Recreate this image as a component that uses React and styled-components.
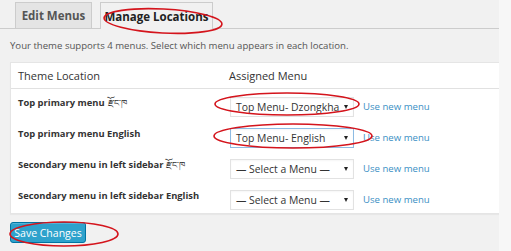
import React from 'react';
import styled, { createGlobalStyle } from 'styled-components';

const GlobalStyle = createGlobalStyle`
  html, body {
    margin: 0;
    padding: 0;
    background: #f7f7f7;
  }
  body {
    font-family: "Open Sans", "Noto Sans", sans-serif;
    color: #444;
  }
`;

const Page = styled.div`
  position: relative;
  display: flex;
  width: 511px;
  height: 251px;
  overflow: hidden;
`;

const Main = styled.div`
  width: 499px;
  background: #f1f1f1;
  padding-top: 2px;
  box-sizing: border-box;
`;

const Side = styled.div`
  flex: 1;
  background: #f7f7f7;
`;

const TabBar = styled.div`
  display: flex;
  align-items: flex-end;
  gap: 8px;
  padding-left: 15px;
  height: 26px;
  border-bottom: 1px solid #ccc;
`;

const Tab = styled.div`
  display: flex;
  align-items: center;
  justify-content: center;
  width: ${(p) => p.$w}px;
  box-sizing: border-box;
  border: 1px solid #ccc;
  border-bottom: none;
  background: ${(p) => (p.$active ? '#f1f1f1' : '#e4e4e4')};
  margin-bottom: ${(p) => (p.$active ? '-1px' : '0')};
  height: ${(p) => (p.$active ? '27px' : '26px')};
  font-size: 11.5px;
  font-weight: 700;
  color: ${(p) => (p.$active ? '#222' : '#555')};
`;

const Intro = styled.p`
  margin: 0;
  padding: 10px 0 0 10px;
  font-size: 9.6px;
  line-height: 13px;
  color: #555;
`;

const Table = styled.div`
  margin: 10px 0 0 10px;
  width: 489px;
  background: #fff;
  border: 1px solid #e5e5e5;
  border-right: none;
  box-sizing: border-box;
  box-shadow: 0 1px 1px rgba(0, 0, 0, 0.04);
`;

const HeadRow = styled.div`
  display: grid;
  grid-template-columns: 211px 1fr;
  height: 25px;
  align-items: center;
  border-bottom: 1px solid #e1e1e1;
  padding-left: 7px;
  font-size: 11px;
  color: #333;
`;

const Row = styled.div`
  display: grid;
  grid-template-columns: 212px 1fr;
  height: 31px;
  padding-left: 7px;
`;

const Label = styled.div`
  padding-top: 7px;
  font-size: 9.4px;
  font-weight: 700;
  color: #333;
  line-height: 13px;
`;

const Dz = styled.span`
  font-weight: 400;
  font-size: 9px;
  margin-left: 3px;
`;

const Cell = styled.div`
  display: flex;
  align-items: flex-start;
  padding-top: 8px;
  gap: 9px;
`;

const Select = styled.div`
  display: flex;
  align-items: center;
  justify-content: space-between;
  width: 124px;
  height: 20px;
  box-sizing: border-box;
  padding: 0 5px 0 5px;
  background: #fff;
  border: 1px solid ${(p) => (p.$focus ? '#8dbbe3' : '#e2e2e2')};
  box-shadow: inset 0 1px 2px rgba(0, 0, 0, 0.04);
  font-size: 10.4px;
  color: #333;
  white-space: nowrap;
`;

const Arrow = styled.span`
  flex: none;
  width: 0;
  height: 0;
  border-left: 2.5px solid transparent;
  border-right: 2.5px solid transparent;
  border-top: 4px solid #222;
`;

const UseNew = styled.a`
  font-size: 9.6px;
  line-height: 20px;
  color: #3a8fc4;
  text-decoration: none;
`;

const SaveButton = styled.button`
  display: block;
  margin: 8px 0 0 10px;
  width: 76px;
  height: 21px;
  padding: 0;
  background: #2ea2cc;
  border: 1px solid #0074a2;
  border-radius: 3px;
  box-shadow: inset 0 1px 0 rgba(120, 200, 230, 0.5);
  color: #fff;
  font-family: "Open Sans", "Noto Sans", sans-serif;
  font-size: 10.5px;
`;

const Marks = styled.svg`
  position: absolute;
  inset: 0;
  pointer-events: none;
`;

const locations = [
  { label: 'Top primary menu', dz: true, value: 'Top Menu- Dzongkha' },
  { label: 'Top primary menu English', value: 'Top Menu- English', focus: true },
  { label: 'Secondary menu in left sidebar', dz: true, value: '— Select a Menu —' },
  { label: 'Secondary menu in left sidebar English', value: '— Select a Menu —' },
];

export default function App() {
  return (
    <>
      <GlobalStyle />
      <Page>
        <Main>
          <TabBar>
            <Tab $w={77}>Edit Menus</Tab>
            <Tab $w={113} $active>Manage Locations</Tab>
          </TabBar>
          <Intro>Your theme supports 4 menus. Select which menu appears in each location.</Intro>
          <Table>
            <HeadRow>
              <span>Theme Location</span>
              <span>Assigned Menu</span>
            </HeadRow>
            {locations.map((loc) => (
              <Row key={loc.label}>
                <Label>
                  {loc.label}
                  {loc.dz && <Dz>རྫོང་ཁ</Dz>}
                </Label>
                <Cell>
                  <Select $focus={loc.focus}>
                    <span>{loc.value}</span>
                    <Arrow />
                  </Select>
                  <UseNew href="#">Use new menu</UseNew>
                </Cell>
              </Row>
            ))}
          </Table>
          <SaveButton>Save Changes</SaveButton>
        </Main>
        <Side />
        <Marks width="511" height="251" viewBox="0 0 511 251">
          <g fill="none" stroke="#d4141c" strokeWidth="1.6">
            <ellipse cx="163" cy="21" rx="59" ry="12" transform="rotate(3 163 21)" />
            <ellipse cx="287" cy="104" rx="72" ry="11" />
            <ellipse cx="293" cy="136" rx="79" ry="12" />
            <ellipse cx="64" cy="234" rx="54" ry="12" />
          </g>
        </Marks>
      </Page>
    </>
  );
}
